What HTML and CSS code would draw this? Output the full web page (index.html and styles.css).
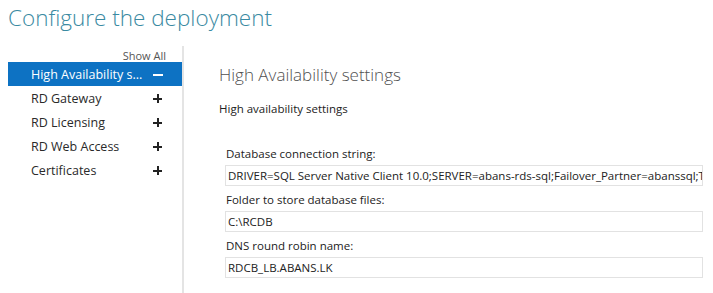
FILE: index.html
```html
<!DOCTYPE html>
<html>
<head>
<meta charset="utf-8">
<link rel="stylesheet" href="styles.css">
</head>
<body>
<h1 class="title">Configure the deployment</h1>
<div class="main">
  <nav class="sidebar">
    <div class="show-all">Show All</div>
    <ul class="nav">
      <li class="nav-item selected"><span class="nav-label">High Availability s...</span><span class="sign minus"></span></li>
      <li class="nav-item"><span class="nav-label">RD Gateway</span><span class="sign plus"></span></li>
      <li class="nav-item"><span class="nav-label">RD Licensing</span><span class="sign plus"></span></li>
      <li class="nav-item"><span class="nav-label">RD Web Access</span><span class="sign plus"></span></li>
      <li class="nav-item"><span class="nav-label">Certificates</span><span class="sign plus"></span></li>
    </ul>
  </nav>
  <section class="content">
    <h2 class="heading">High Availability settings</h2>
    <p class="subheading">High availability settings</p>
    <div class="fields">
      <div class="field">
        <div class="label">Database connection string:</div>
        <div class="box">DRIVER=SQL Server Native Client 10.0;SERVER=abans-rds-sql;Failover_Partner=abanssql;Trusted_Connection=Yes</div>
      </div>
      <div class="field">
        <div class="label">Folder to store database files:</div>
        <div class="box">C:\RCDB</div>
      </div>
      <div class="field">
        <div class="label">DNS round robin name:</div>
        <div class="box">RDCB_LB.ABANS.LK</div>
      </div>
    </div>
  </section>
</div>
</body>
</html>
```
FILE: styles.css
```css
html, body {
  margin: 0;
  padding: 0;
  background: #fff;
  font-family: "Open Sans", "Noto Sans", sans-serif;
  color: #222;
}
.title {
  margin: 0;
  padding: 2px 0 0 8px;
  height: 44px;
  font-size: 22.5px;
  font-weight: 300;
  color: #3a8aa2;
  line-height: 32px;
}
.main {
  display: flex;
  height: 249px;
}
.sidebar {
  width: 174px;
  margin-left: 8px;
  border-right: 2px solid #e4e4e4;
  padding-top: 3px;
}
.show-all {
  text-align: right;
  padding-right: 16px;
  font-size: 11px;
  color: #555;
  line-height: 13px;
  height: 13px;
}
.nav {
  list-style: none;
  margin: 0;
  padding: 0;
}
.nav-item {
  height: 24px;
  display: flex;
  align-items: center;
  padding-left: 23px;
  font-size: 12.5px;
  color: #2a2a2a;
}
.nav-item.selected {
  background: #0d72c3;
  color: #fff;
}
.nav-label {
  width: 122px;
}
.sign {
  position: relative;
  width: 9px;
  height: 9px;
  display: inline-block;
}
.sign::before, .sign.plus::after {
  content: "";
  position: absolute;
  background: #222;
}
.sign::before {
  left: 0;
  top: 4px;
  width: 9px;
  height: 2px;
}
.sign.plus::after {
  left: 3.5px;
  top: 0;
  width: 2px;
  height: 9px;
}
.sign.minus::before {
  background: #fff;
  width: 10px;
}
.content {
  flex: 1;
  padding-left: 35px;
  padding-right: 10px;
  min-width: 0;
}
.heading {
  margin: 0;
  padding-top: 18px;
  font-size: 17px;
  font-weight: 300;
  color: #505050;
  line-height: 22px;
}
.subheading {
  margin: 0;
  padding-top: 15px;
  font-size: 11.5px;
  line-height: 16px;
}
.fields {
  padding-top: 26px;
  padding-left: 6px;
}
.field {
  margin-bottom: 3px;
}
.label {
  font-size: 11.5px;
  line-height: 22px;
  padding-left: 1px;
  color: #222;
}
.box {
  border: 1px solid #e2e2e2;
  height: 19px;
  line-height: 19px;
  padding-left: 2px;
  font-size: 11.5px;
  white-space: nowrap;
  overflow: hidden;
}
```
